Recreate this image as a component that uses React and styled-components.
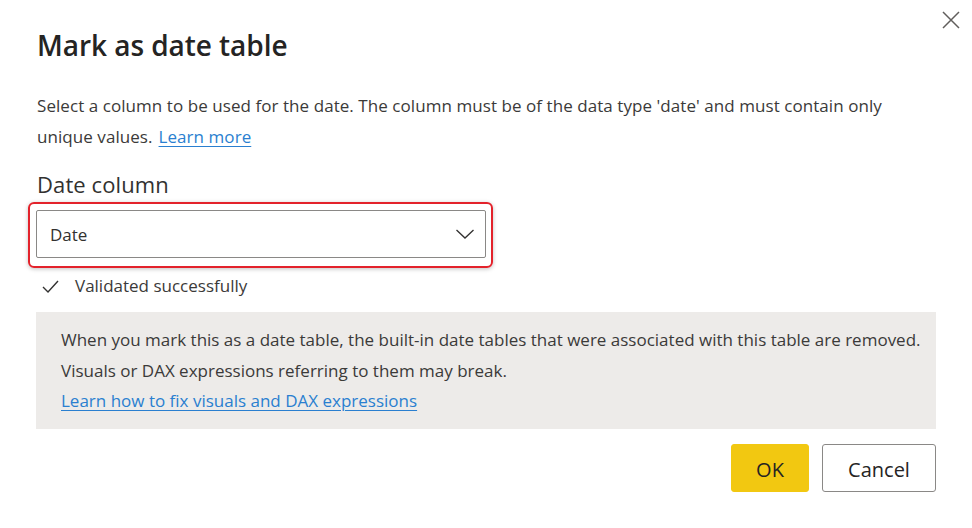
import React from "react";
import styled, { createGlobalStyle } from "styled-components";

const Global = createGlobalStyle`
  html, body { margin: 0; padding: 0; background: #ffffff; }
  body { font-family: "Open Sans", "Noto Sans", Arial, sans-serif; }
  * { box-sizing: border-box; }
`;

const Dialog = styled.div`
  width: 972px;
  height: 528px;
  background: #ffffff;
  padding: 0 36px 0 36px;
  display: flex;
  flex-direction: column;
  overflow: hidden;
`;

const Header = styled.div`
  display: flex;
  justify-content: space-between;
  align-items: flex-start;
`;

const Title = styled.h1`
  margin: 26px 0 0 1px;
  font-size: 28px;
  line-height: 38px;
  font-weight: 600;
  color: #252423;
  letter-spacing: -0.05px;
`;

const CloseButton = styled.button`
  margin: 11px -24px 0 0;
  width: 18px;
  height: 18px;
  padding: 0;
  border: none;
  background: transparent;
  display: flex;
  cursor: pointer;
`;

const Description = styled.p`
  margin: 26px 0 0 1px;
  max-width: 870px;
  font-size: 17px;
  line-height: 31px;
  color: #3b3a39;
  letter-spacing: 0.06px;
`;

const Link = styled.a`
  color: #2a7fd0;
  text-decoration: underline;
  text-underline-offset: 3px;
  margin-left: ${(p) => p.$gap || 0}px;
`;

const FieldLabel = styled.div`
  margin: 18px 0 0 1px;
  font-size: 22px;
  line-height: 28px;
  color: #323130;
  letter-spacing: 0.1px;
`;

const Highlight = styled.div`
  margin: 4px 0 0 -8px;
  width: 465px;
  padding: 6px 5px 8px 6px;
  border: 2px solid #e3222b;
  border-radius: 6px;
  box-shadow: 0 1px 4px rgba(0, 0, 0, 0.25);
`;

const Select = styled.div`
  height: 48px;
  border: 1px solid #8a8886;
  border-radius: 2px;
  display: flex;
  align-items: center;
  justify-content: space-between;
  padding: 0 10px 0 13px;
  font-size: 17px;
  color: #323130;
  background: #ffffff;
`;

const Validation = styled.div`
  margin: 6px 0 0 6px;
  display: flex;
  align-items: center;
  gap: 16px;
  font-size: 17px;
  line-height: 24px;
  color: #3b3a39;
`;

const Notice = styled.div`
  margin-top: 14px;
  background: #edebe9;
  padding: 13px 6px 12px 25px;
  font-size: 17px;
  line-height: 30.5px;
  color: #3b3a39;
`;

const Footer = styled.div`
  margin-top: 15px;
  display: flex;
  justify-content: flex-end;
  gap: 13px;
`;

const Button = styled.button`
  height: 48px;
  min-width: ${(p) => p.$w}px;
  padding: 3px 20px 0;
  border-radius: 3px;
  font-family: inherit;
  font-size: 20px;
  color: #252423;
  cursor: pointer;
  background: ${(p) => (p.$primary ? "#f2c811" : "#ffffff")};
  border: 1px solid ${(p) => (p.$primary ? "#f2c811" : "#8a8886")};
`;

export default function App() {
  return (
    <>
      <Global />
      <Dialog>
        <Header>
          <Title>Mark as date table</Title>
          <CloseButton aria-label="Close">
            <svg width="18" height="18" viewBox="0 0 18 18">
              <path d="M1 1 L17 17 M17 1 L1 17" stroke="#605e5c" strokeWidth="1.5" fill="none" />
            </svg>
          </CloseButton>
        </Header>
        <Description>
          Select a column to be used for the date. The column must be of the data type 'date' and must contain only unique values.
          <Link href="#" $gap={6}>Learn more</Link>
        </Description>
        <FieldLabel>Date column</FieldLabel>
        <Highlight>
          <Select>
            <span>Date</span>
            <svg width="20" height="12" viewBox="0 0 20 12">
              <path d="M1.5 2 L10 10 L18.5 2" stroke="#323130" strokeWidth="1.3" fill="none" />
            </svg>
          </Select>
        </Highlight>
        <Validation>
          <svg width="17" height="13" viewBox="0 0 17 13">
            <path d="M1 7 L6 12 L16 1" stroke="#323130" strokeWidth="1.4" fill="none" />
          </svg>
          Validated successfully
        </Validation>
        <Notice>
          When you mark this as a date table, the built-in date tables that were associated with this table are removed. Visuals or DAX expressions referring to them may break.
          <br />
          <Link href="#">Learn how to fix visuals and DAX expressions</Link>
        </Notice>
        <Footer>
          <Button $primary $w={78}>OK</Button>
          <Button $w={114}>Cancel</Button>
        </Footer>
      </Dialog>
    </>
  );
}
